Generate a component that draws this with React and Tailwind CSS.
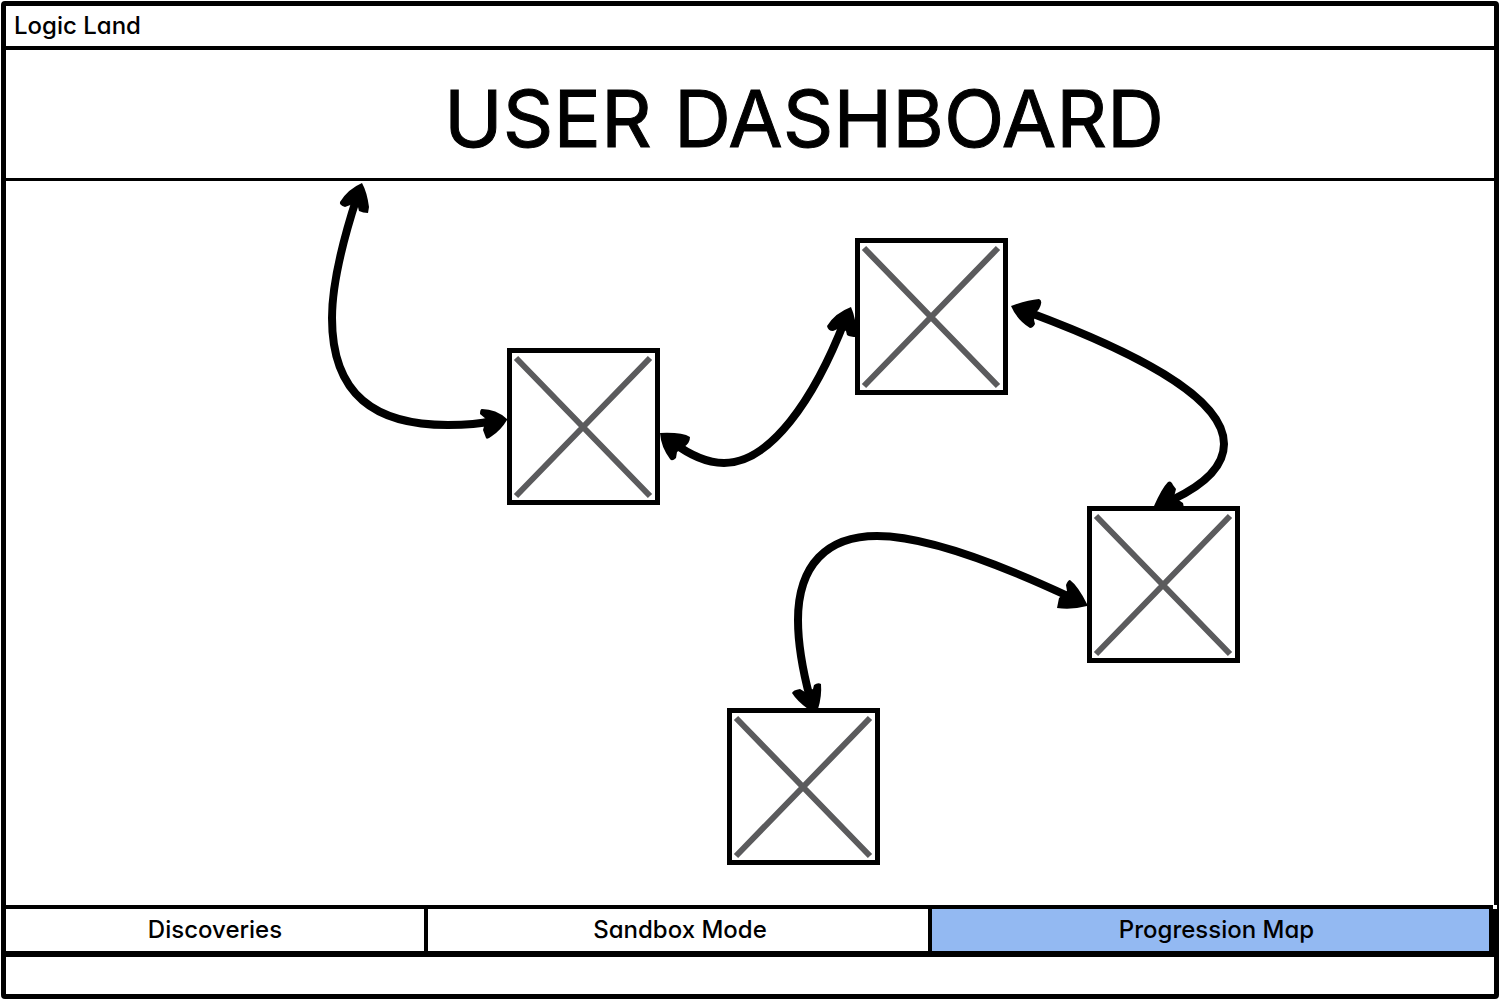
import React from "react";

const nodes = [
  { name: "Level 1", place: "left-[501px] top-[167px]" },
  { name: "Level 2", place: "left-[849px] top-[57px]" },
  { name: "Level 3", place: "left-[1081px] top-[325px]" },
  { name: "Level 4", place: "left-[721px] top-[527px]" },
];

const curves = [
  "M357 197C343 240 332 285 332 318C332 395 375 425 448 425C465 425 480 424 492 421",
  "M672 442C690 455 706 463 724 463C770 463 814 400 845 320",
  "M1028 312C1130 350 1224 396 1224 444C1224 465 1208 483 1172 500",
  "M810 698C802 668 798 645 798 620C798 565 827 536 877 536C925 536 995 562 1070 597",
];

const heads = [
  "M362 183Q348 189 340 202Q339 205 345 207L353 204L358 207L359 211Q363 213 368 213L369 207Q367 192 362 183Z",
  "M507 419Q496 409 482 409Q480 409 480 414L486 419L483 430L486 438Q487 440 492 436Q501 430 507 420Z",
  "M660 433Q682 432 690 437Q690 443 684 447L677 452L676 458Q672 462 670 459Q661 447 660 433Z",
  "M851 307Q835 313 827 326Q828 331 833 331L840 328L846 331L847 335Q850 337 857 337Q856 318 851 307Z",
  "M1011 306Q1027 300 1039 299Q1042 300 1041 304Q1040 309 1036 312L1034 320L1035 324Q1033 328 1030 328Q1017 320 1011 306Z",
  "M1154 506Q1162 488 1168 482Q1171 480 1173 485L1176 489L1174 497L1183 503L1184 508Z",
  "M1087 604Q1078 586 1070 580Q1068 580 1066 585L1067 591L1059 598L1057 608Q1072 610 1087 606Z",
  "M808 709Q797 701 792 693Q793 690 800 689L805 692L813 689L814 685Q818 682 821 684Q822 696 818 709Z",
];

function MapNode({ name, place }) {
  return (
    <button
      type="button"
      aria-label={name}
      className={`absolute h-[157px] w-[153px] border-5 border-black bg-white ${place}`}
    >
      <svg viewBox="0 0 143 147" className="h-full w-full" fill="none" stroke="#5b5b5d" strokeWidth="6">
        <path d="M4 5L138 143M138 5L4 143" />
      </svg>
    </button>
  );
}

export default function App() {
  return (
    <div className="flex min-h-screen bg-white p-px font-['Inter',sans-serif] text-black [font-feature-settings:'cv11','ss03']">
      <div className="flex min-w-0 flex-1 flex-col rounded-sm border-5 border-black">
        <header className="flex h-11 items-center border-b-4 border-black px-2 text-2xl font-medium">Logic Land</header>
        <div className="flex h-[131px] items-center justify-center border-b-3 border-black pt-2 pl-[108px]">
          <h1 className="text-[79px] leading-none whitespace-nowrap [-webkit-text-stroke:1px_black] [stroke-linejoin:round]">
            USER DASHBOARD
          </h1>
        </div>
        <main className="relative flex-1 overflow-hidden">
          {nodes.map((n) => (
            <MapNode key={n.name} {...n} />
          ))}
          <svg
            aria-hidden="true"
            width="1488"
            height="724"
            viewBox="6 181 1488 724"
            className="pointer-events-none absolute top-0 left-0 max-w-none"
          >
            <g fill="none" stroke="#000" strokeWidth="8">
              {curves.map((d) => (
                <path key={d} d={d} />
              ))}
            </g>
            {heads.map((d) => (
              <path key={d} d={d} />
            ))}
          </svg>
        </main>
        <nav className="relative grid h-[52px] grid-cols-[422fr_504fr_557fr] border-t-4 border-r-5 border-b-6 border-black text-2xl font-medium">
          <button type="button" className="border-r-4 border-black">Discoveries</button>
          <button type="button" className="border-r-4 border-black pl-1">Sandbox Mode</button>
          <button type="button" aria-current="page" className="bg-[#93b9f2] pl-3">Progression Map</button>
          <span className="absolute -top-1 -right-2 size-1 bg-white" />
        </nav>
        <footer className="h-[37px]" />
      </div>
    </div>
  );
}
